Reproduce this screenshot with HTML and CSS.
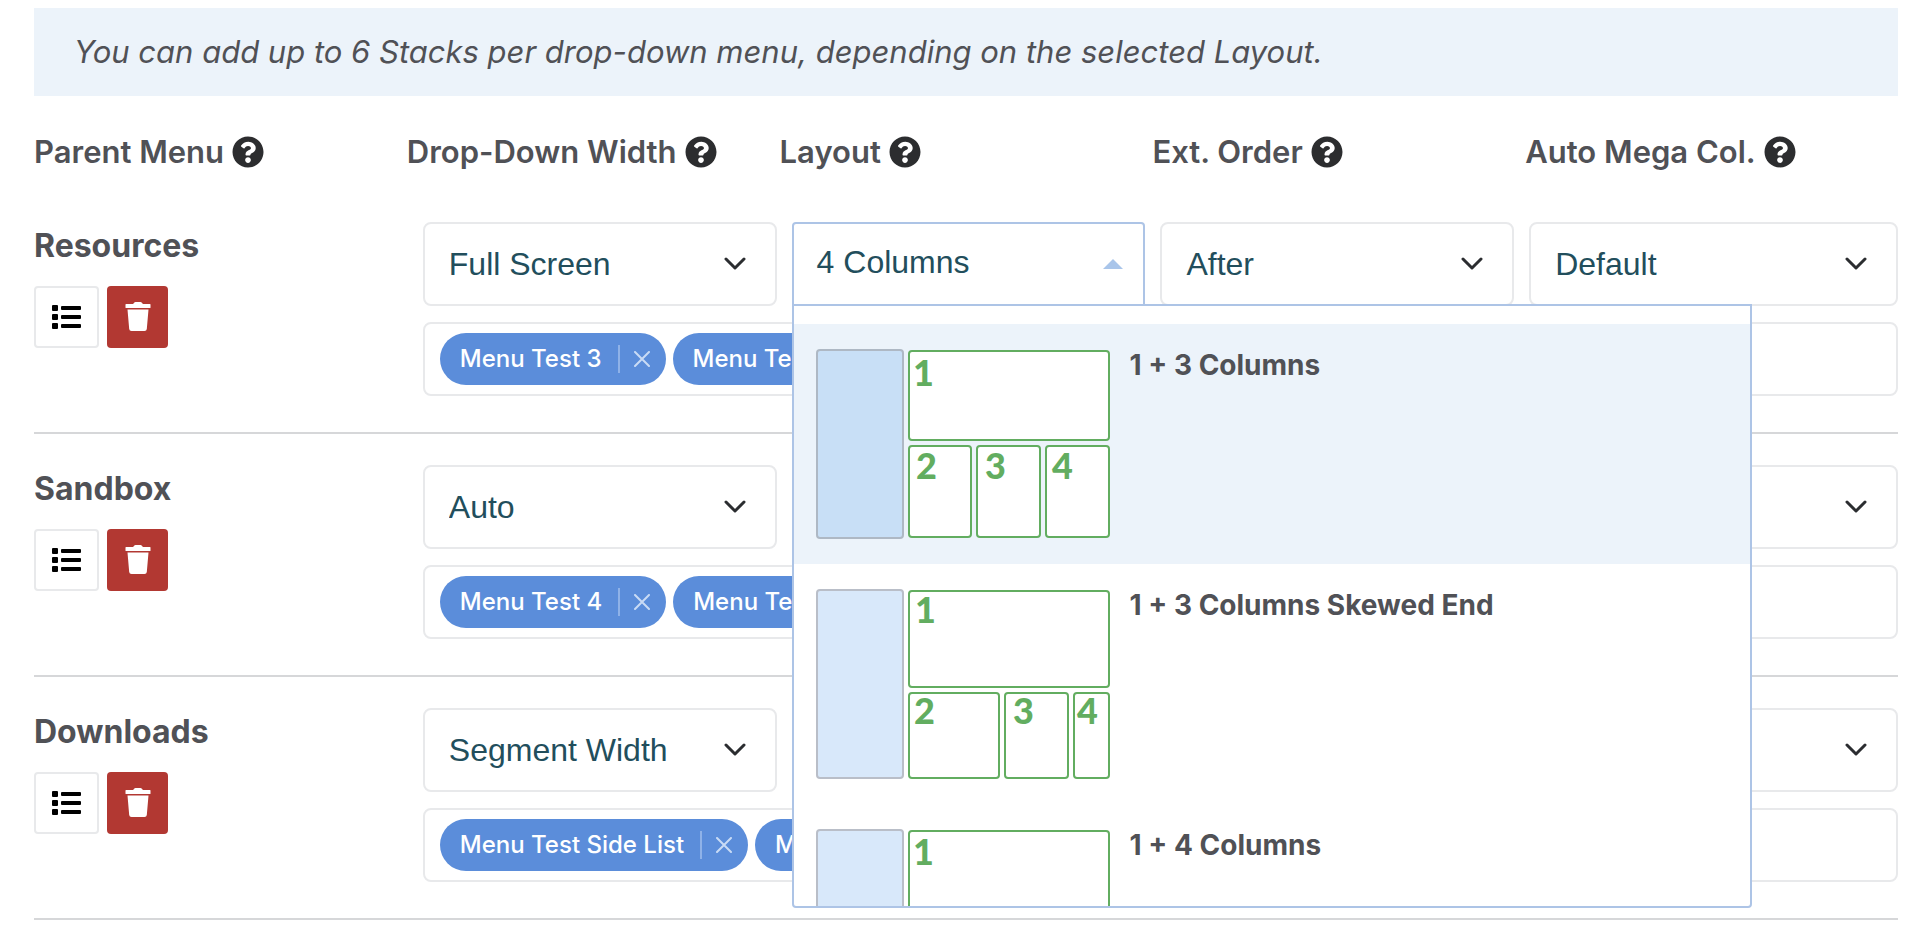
FILE: index.html
```
<!DOCTYPE html>
<html lang="en">
<head>
  <meta charset="UTF-8">
  <title>Mega Menu Settings</title>
  <link rel="stylesheet" href="styles.css">
</head>
<body>

  <!-- Shared icons -->
  <svg class="sprite" aria-hidden="true">
    <symbol id="icon-help" viewBox="0 0 512 512">
      <path d="M504 256c0 137-111 248-248 248S8 393 8 256C8 119 119 8 256 8s248 111 248 248zM262.700 90c-54.500 0-89.300 23-116.500 63.800-3.600 5.300-2.400 12.400 2.700 16.300l34.700 26.300c5.200 3.900 12.600 3 16.700-2.100 17.900-22.700 30.100-35.800 57.300-35.800 20.400 0 45.700 13.100 45.700 33 0 15-12.400 22.700-32.500 34C247.100 238.500 216 254.900 216 296v4c0 6.600 5.400 12 12 12h56c6.600 0 12-5.400 12-12v-1.300c0-28.500 83.200-29.600 83.200-106.700 0-58-60.200-102-116.500-102zM256 338c-25.400 0-46 20.600-46 46s20.600 46 46 46 46-20.600 46-46-20.600-46-46-46z"/>
    </symbol>
    <symbol id="icon-list" viewBox="0 0 30 24">
      <rect x="0" y="0" width="6" height="6" rx="1"/>
      <rect x="9" y="1" width="20" height="4" rx="1"/>
      <rect x="0" y="9" width="6" height="6" rx="1"/>
      <rect x="9" y="10" width="20" height="4" rx="1"/>
      <rect x="0" y="18" width="6" height="6" rx="1"/>
      <rect x="9" y="19" width="20" height="4" rx="1"/>
    </symbol>
    <symbol id="icon-trash" viewBox="0 0 26 30">
      <path d="M1 2h7l1-1q.5-1 1.500-1h5q1 0 1.500 1l1 1h7q.5 0 .5.500v3q0 .5-.5.500h-24q-.5 0-.5-.500v-3q0-.5.500-.5zM2.500 7.500h21l-1.700 19.500q-.2 2-2.300 2h-13q-2.100 0-2.300-2z"/>
    </symbol>
    <symbol id="icon-chevron" viewBox="0 0 22 14">
      <path d="M2 2l9 9 9-9" fill="none" stroke="#2b2d30" stroke-width="3" stroke-linecap="round" stroke-linejoin="round"/>
    </symbol>
    <symbol id="icon-close" viewBox="0 0 16 16">
      <path d="M1 1l14 14M15 1L1 15" fill="none" stroke="#c9dbf5" stroke-width="2" stroke-linecap="round"/>
    </symbol>
  </svg>

  <main class="settings">
    <p class="notice">You can add up to 6 Stacks per drop-down menu, depending on the selected Layout.</p>

    <div class="headings">
      <div class="heading">Parent Menu <svg><use href="#icon-help"/></svg></div>
      <div class="heading">Drop-Down Width <svg><use href="#icon-help"/></svg></div>
      <div class="heading">Layout <svg><use href="#icon-help"/></svg></div>
      <div class="heading">Ext. Order <svg><use href="#icon-help"/></svg></div>
      <div class="heading">Auto Mega Col. <svg><use href="#icon-help"/></svg></div>
    </div>

    <section class="menu-row">
      <div class="parent">
        <h3>Resources</h3>
        <div class="actions">
          <button type="button" class="btn-list" aria-label="Show items"><svg><use href="#icon-list"/></svg></button>
          <button type="button" class="btn-delete" aria-label="Delete"><svg><use href="#icon-trash"/></svg></button>
        </div>
      </div>
      <div class="fields">
        <div class="selects">
          <div class="select-box">
            <select aria-label="Drop-Down Width"><option>Full Screen</option><option>Auto</option><option>Segment Width</option></select>
            <svg><use href="#icon-chevron"/></svg>
          </div>
          <div class="layout-picker">
            <button type="button" class="picker-toggle" aria-haspopup="listbox" aria-expanded="true">
              4 Columns <span class="arrow-up"></span>
            </button>
            <div class="picker-menu" role="listbox" aria-label="Layout">
              <div class="layout-option active" role="option" aria-selected="true">
                <svg class="preview" viewBox="0 0 294 190">
                  <rect class="side" x="1" y="1" width="86" height="188" rx="3"/>
                  <rect class="cell" x="93" y="2" width="200" height="89" rx="3"/>
                  <rect class="cell" x="93" y="97" width="62" height="91" rx="3"/>
                  <rect class="cell" x="161" y="97" width="63" height="91" rx="3"/>
                  <rect class="cell" x="230" y="97" width="63" height="91" rx="3"/>
                  <text x="97" y="37">1</text>
                  <text x="100" y="130">2</text>
                  <text x="169" y="130">3</text>
                  <text x="236" y="130">4</text>
                </svg>
                <span class="option-name">1 + 3 Columns</span>
              </div>
              <div class="layout-option" role="option">
                <svg class="preview" viewBox="0 0 294 190">
                  <rect class="side" x="1" y="1" width="86" height="188" rx="3"/>
                  <rect class="cell" x="93" y="2" width="200" height="96" rx="3"/>
                  <rect class="cell" x="93" y="104" width="90" height="85" rx="3"/>
                  <rect class="cell" x="189" y="104" width="63" height="85" rx="3"/>
                  <rect class="cell" x="258" y="104" width="35" height="85" rx="3"/>
                  <text x="99" y="34">1</text>
                  <text x="98" y="135">2</text>
                  <text x="197" y="135">3</text>
                  <text x="261" y="135">4</text>
                </svg>
                <span class="option-name">1 + 3 Columns Skewed End</span>
              </div>
              <div class="layout-option" role="option">
                <svg class="preview" viewBox="0 0 294 190">
                  <rect class="side" x="1" y="1" width="86" height="188" rx="3"/>
                  <rect class="cell" x="93" y="2" width="200" height="89" rx="3"/>
                  <text x="97" y="36">1</text>
                </svg>
                <span class="option-name">1 + 4 Columns</span>
              </div>
            </div>
          </div>
          <div class="select-box">
            <select aria-label="Ext. Order"><option>After</option><option>Before</option></select>
            <svg><use href="#icon-chevron"/></svg>
          </div>
          <div class="select-box">
            <select aria-label="Auto Mega Col."><option>Default</option></select>
            <svg><use href="#icon-chevron"/></svg>
          </div>
        </div>
        <div class="tags">
          <span class="tag">Menu Test 3<button type="button" aria-label="Remove"><svg><use href="#icon-close"/></svg></button></span>
          <span class="tag">Menu Test 4<button type="button" aria-label="Remove"><svg><use href="#icon-close"/></svg></button></span>
        </div>
      </div>
    </section>

    <section class="menu-row">
      <div class="parent">
        <h3>Sandbox</h3>
        <div class="actions">
          <button type="button" class="btn-list" aria-label="Show items"><svg><use href="#icon-list"/></svg></button>
          <button type="button" class="btn-delete" aria-label="Delete"><svg><use href="#icon-trash"/></svg></button>
        </div>
      </div>
      <div class="fields">
        <div class="selects">
          <div class="select-box">
            <select aria-label="Drop-Down Width"><option>Auto</option><option>Full Screen</option><option>Segment Width</option></select>
            <svg><use href="#icon-chevron"/></svg>
          </div>
          <div class="select-box">
            <select aria-label="Layout"></select>
            <svg><use href="#icon-chevron"/></svg>
          </div>
          <div class="select-box">
            <select aria-label="Ext. Order"></select>
            <svg><use href="#icon-chevron"/></svg>
          </div>
          <div class="select-box">
            <select aria-label="Auto Mega Col."></select>
            <svg><use href="#icon-chevron"/></svg>
          </div>
        </div>
        <div class="tags">
          <span class="tag">Menu Test 4<button type="button" aria-label="Remove"><svg><use href="#icon-close"/></svg></button></span>
          <span class="tag">Menu Test 3<button type="button" aria-label="Remove"><svg><use href="#icon-close"/></svg></button></span>
        </div>
      </div>
    </section>

    <section class="menu-row">
      <div class="parent">
        <h3>Downloads</h3>
        <div class="actions">
          <button type="button" class="btn-list" aria-label="Show items"><svg><use href="#icon-list"/></svg></button>
          <button type="button" class="btn-delete" aria-label="Delete"><svg><use href="#icon-trash"/></svg></button>
        </div>
      </div>
      <div class="fields">
        <div class="selects">
          <div class="select-box">
            <select aria-label="Drop-Down Width"><option>Segment Width</option><option>Full Screen</option><option>Auto</option></select>
            <svg><use href="#icon-chevron"/></svg>
          </div>
          <div class="select-box">
            <select aria-label="Layout"></select>
            <svg><use href="#icon-chevron"/></svg>
          </div>
          <div class="select-box">
            <select aria-label="Ext. Order"></select>
            <svg><use href="#icon-chevron"/></svg>
          </div>
          <div class="select-box">
            <select aria-label="Auto Mega Col."></select>
            <svg><use href="#icon-chevron"/></svg>
          </div>
        </div>
        <div class="tags">
          <span class="tag">Menu Test Side List<button type="button" aria-label="Remove"><svg><use href="#icon-close"/></svg></button></span>
          <span class="tag">Menu Test 3<button type="button" aria-label="Remove"><svg><use href="#icon-close"/></svg></button></span>
        </div>
      </div>
    </section>
  </main>

</body>
</html>
```
FILE: styles.css
```
:root {
  --text-color: #505156;
  --value-color: #224e5c;
  --border-color: #e8e9eb;
  --divider-color: #d6d7d9;
  --focus-color: #adc4e6;
  --highlight-color: #ecf3fa;
  --tag-color: #5b8dda;
  --danger-color: #b23832;
  --cell-color: #62ad60;
}

* {
  box-sizing: border-box;
}

body {
  margin: 0;
  padding: 8px 18px 8px 34px;
  background: #fff;
  color: var(--text-color);
  font-family: Inter, "Liberation Sans", sans-serif;
  font-size: 32px;
  line-height: 40px;
}

button {
  padding: 0;
  border: none;
  background: none;
  cursor: pointer;
}

.sprite {
  display: none;
}

.notice {
  margin: 0;
  padding: 24px 40px;
  background: var(--highlight-color);
  font-size: 31px;
  font-style: italic;
}

.headings {
  display: grid;
  grid-template-columns: repeat(5, 1fr);
  margin-top: 36px;
}

.heading {
  display: flex;
  align-items: center;
  gap: 8px;
  font-size: 31px;
  font-weight: 600;
  white-space: nowrap;
}

.heading svg {
  width: 32px;
  height: 32px;
  fill: #2c2d2f;
}

.menu-row {
  display: grid;
  grid-template-columns: 1fr 4fr;
  padding: 31px 0 36px;
  border-bottom: 2px solid var(--divider-color);
}

.headings + .menu-row {
  padding-top: 50px;
}

.parent h3 {
  margin: 4px 0 20px;
  font-size: 32px;
  font-weight: 700;
  line-height: 40px;
}

.actions {
  display: flex;
  gap: 8px;
}

.actions button {
  display: flex;
  align-items: center;
  justify-content: center;
  height: 62px;
  border-radius: 4px;
}

.actions .btn-list {
  width: 65px;
  border: 2px solid var(--border-color);
}

.btn-list svg {
  width: 30px;
  height: 24px;
}

.actions .btn-delete {
  width: 61px;
  background: var(--danger-color);
}

.btn-delete svg {
  width: 26px;
  height: 30px;
  fill: #fff;
}

.fields {
  min-width: 0;
  padding-left: 16px;
}

.selects {
  display: grid;
  grid-template-columns: repeat(4, 1fr);
  margin-bottom: 16px;
}

.select-box {
  position: relative;
  margin-right: 15px;
}

.select-box:last-child {
  margin-right: 0;
}

.select-box select {
  display: block;
  width: 100%;
  height: 84px;
  padding: 0 24px;
  border: 2px solid var(--border-color);
  border-radius: 8px;
  background: #fff;
  color: var(--value-color);
  font-family: "Liberation Sans", Arial, sans-serif;
  font-size: 32px;
  appearance: none;
}

/* arrow sits over the native select */
.select-box svg {
  position: absolute;
  top: 35px;
  right: 31px;
  width: 22px;
  height: 14px;
  pointer-events: none;
}

.layout-picker {
  position: relative;
  margin-right: 15px;
}

.picker-toggle {
  display: flex;
  align-items: center;
  justify-content: space-between;
  width: 100%;
  height: 84px;
  padding: 0 20px 4px 23px;
  border: 2px solid var(--focus-color);
  border-radius: 4px 4px 0 0;
  background: #fff;
  color: var(--value-color);
  font-family: "Liberation Sans", Arial, sans-serif;
  font-size: 32px;
}

.arrow-up {
  margin-top: 4px;
  border: 10px solid transparent;
  border-top: none;
  border-bottom-color: #a9c5ea;
}

.picker-menu {
  position: absolute;
  top: 82px;
  left: 0;
  z-index: 5;
  width: 960px;
  height: 604px;
  padding-top: 18px;
  overflow: hidden;
  border: 2px solid var(--focus-color);
  border-radius: 0 0 4px 4px;
  background: #fff;
}

.layout-option {
  display: flex;
  gap: 20px;
  height: 240px;
  padding: 25px 22px;
}

.layout-option.active {
  background: var(--highlight-color);
}

.preview {
  width: 294px;
  height: 190px;
}

.preview .side {
  fill: #d8e8fa;
  stroke: #b9bec8;
  stroke-width: 2;
}

.active .side {
  fill: #c8dff6;
  stroke: #aeb8c4;
}

.preview .cell {
  fill: #fff;
  stroke: var(--cell-color);
  stroke-width: 2;
}

.preview text {
  fill: var(--cell-color);
  font-family: Lato, sans-serif;
  font-size: 36px;
  font-weight: 900;
}

.option-name {
  font-size: 28px;
  font-weight: 700;
  line-height: 32px;
}

.tags {
  display: flex;
  gap: 7px;
  height: 74px;
  padding: 9px 15px;
  overflow: hidden;
  border: 2px solid var(--border-color);
  border-radius: 8px;
}

.tag {
  display: flex;
  align-items: center;
  height: 52px;
  padding: 0 16px 0 20px;
  border-radius: 26px;
  background: var(--tag-color);
  color: #fff;
  font-size: 24px;
  font-weight: 500;
  white-space: nowrap;
}

.tag button {
  display: flex;
  align-items: center;
  height: 28px;
  margin-left: 16px;
  padding-left: 14px;
  border-left: 2px solid #8fb2e8;
}

.tag svg {
  width: 16px;
  height: 16px;
}
```
